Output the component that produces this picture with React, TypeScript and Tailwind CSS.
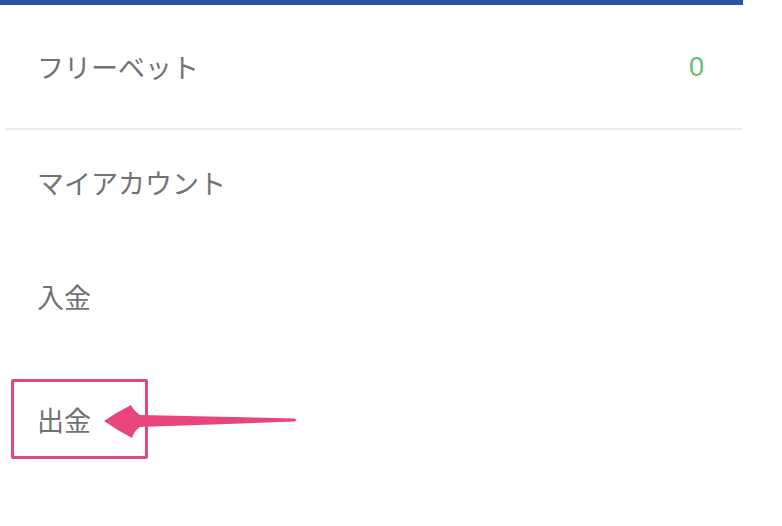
import React from 'react';

const font = { fontFamily: '"Noto Sans CJK JP", "Noto Sans", sans-serif' };

const App: React.FC = () => {
  return (
    <div className="w-[782px] h-[526px] bg-white overflow-hidden" style={font}>
      <div className="w-[743px]">
        <div className="h-[5px] bg-[#2a55a7]" />
        <div className="h-[123px] flex items-center justify-between pl-[37px] pr-[39px]">
          <span className="text-[27px] leading-[28px] text-[#727272]">フリーベット</span>
          <span className="text-[27px] leading-[28px] text-[#5cc274]" style={{ fontFamily: '"Liberation Sans", sans-serif' }}>0</span>
        </div>
        <div className="ml-[5px] h-[2px] bg-[#ececec]" />

        <div className="pl-[37px] text-[27px] leading-[28px] text-[#727272]">
          <div className="mt-[39px]">マイアカウント</div>
          <div className="mt-[86px]">入金</div>
          <div className="mt-[95px] relative">
            出金
            <div className="absolute left-[-26px] top-[-27px] w-[137px] h-[80px] border-[3px] border-[#e5477c] rounded-[2px]" />
            <svg className="absolute left-[63px] top-[-6px]" width="200" height="45" viewBox="0 0 200 45">
              <path
                d="M4 21 Q17 12 31 5 Q34 11 40 15 L195 18.5 Q197 20 195 21.5 L40 27 Q34 31 32 38 Q17 30 4 21 Z"
                fill="#e8457b"
              />
            </svg>
          </div>
        </div>
      </div>
    </div>
  );
};

export default App;
